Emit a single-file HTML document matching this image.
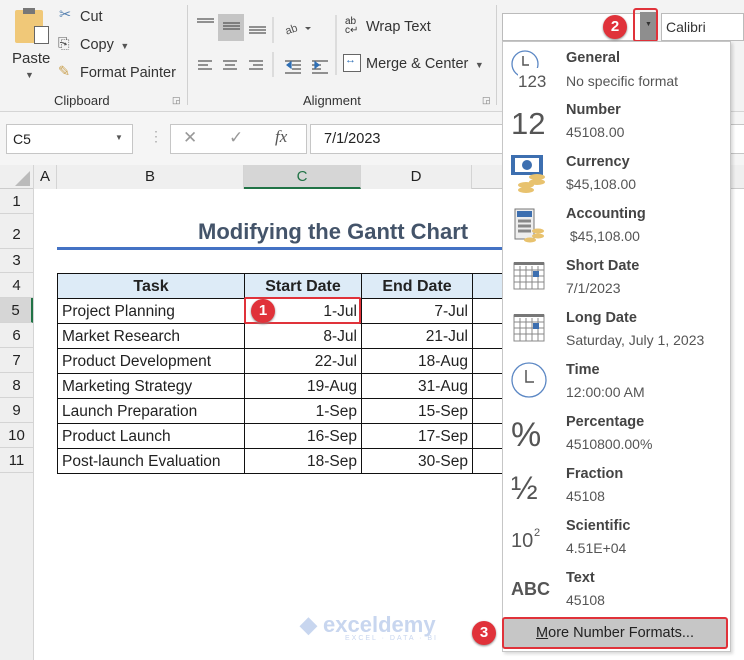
<!DOCTYPE html>
<html><head><meta charset="utf-8"><style>
*{margin:0;padding:0;box-sizing:border-box}
body{width:744px;height:660px;overflow:hidden;position:relative;background:#fff;font-family:"Liberation Sans",sans-serif;color:#222}
.a{position:absolute}
.t{position:absolute;white-space:nowrap}
.rib{font-size:14.5px;color:#333}
.rh{position:absolute;left:0;width:33px;background:#efefef;border-bottom:1px solid #d4d4d4;text-align:center;font-size:15px;color:#222}
.ch{position:absolute;top:165px;height:24px;background:#efefef;border-right:1px solid #d4d4d4;text-align:center;font-size:15px;line-height:24px}
.cell{position:absolute;height:26px;border:1px solid #111;font-size:15.5px;line-height:26px;padding:0 4px;font-family:"Liberation Sans",sans-serif}
.badge{position:absolute;width:24px;height:24px;border-radius:50%;background:#e0323a;color:#fff;font-weight:bold;font-size:15px;text-align:center;line-height:24px;box-shadow:0 1px 2px #888}
.lab{position:absolute;left:566px;font-size:14.5px;font-weight:bold;color:#444}
.sub{position:absolute;left:566px;font-size:14px;color:#555}
</style></head><body>
<div class="a" style="left:0;top:0;width:744px;height:112px;background:#f3f3f3;border-bottom:1px solid #d5d5d5"></div>
<div class="a" style="left:15px;top:10px;width:28px;height:33px;background:#f0c878;border-radius:2px"></div>
<div class="a" style="left:23px;top:8px;width:12px;height:6px;background:#777"></div>
<div class="a" style="left:34px;top:26px;width:15px;height:18px;background:#fff;border:1px solid #666"></div>
<div class="t rib" style="left:12px;top:50px;font-size:15px">Paste</div>
<div class="t" style="left:25px;top:70px;font-size:9px;color:#555">▼</div>
<div class="t rib" style="left:59px;top:7px;color:#5580b0">✂</div>
<div class="t rib" style="left:80px;top:9px">Cut</div>
<div class="t rib" style="left:58px;top:36px;color:#555">⎘</div>
<div class="t rib" style="left:80px;top:37px">Copy <span style="font-size:9px;color:#555">&nbsp;▼</span></div>
<div class="t rib" style="left:58px;top:64px;color:#c9a050">✎</div>
<div class="t rib" style="left:80px;top:65px">Format Painter</div>
<div class="t" style="left:54px;top:93px;font-size:13px;color:#333">Clipboard</div>
<div class="a" style="left:187px;top:5px;width:1px;height:100px;background:#d0d0d0"></div>
<div class="a" style="left:218px;top:14px;width:26px;height:27px;background:#c5c5c5"></div>
<svg class="a" style="left:195px;top:15px" width="270" height="62" stroke="#555" stroke-width="1.2">
<path d="M2 4h17M2 7h17M28 8h17M28 11h17M28 14h17M54 12h17M54 15h17M54 18h17"/>
<path d="M3 46h14M3 50h10M3 54h14M28 46h14M30 50h10M28 54h14M54 46h14M58 50h10M54 54h14"/>
<path d="M90 46h16M97 50h9M97 54h9M90 58h16M117 46h16M117 50h9M117 54h9M117 58h16"/>
<path d="M92 50l4-3v6z M124 50l-4-3v6z" fill="#2e6fb5" stroke="#2e6fb5"/>
<path d="M78 2v26M78 37v26M141 -5v65" stroke="#ccc"/>
<text x="90" y="18" font-size="11" fill="#555" stroke="none" transform="rotate(-20 96 14)">ab</text>
<path d="M110 12l3 3 3-3" fill="#555" stroke="none"/>
</svg>
<div class="t" style="left:345px;top:17px;font-size:10px;line-height:9px;color:#333">ab<br>c↵</div>
<div class="t rib" style="left:366px;top:19px">Wrap Text</div>
<div class="a" style="left:343px;top:54px;width:18px;height:18px;border:1px solid #666;background:#fff"></div>
<div class="t" style="left:345px;top:54px;font-size:11px;color:#2e6fb5">↔</div>
<div class="t rib" style="left:366px;top:56px">Merge &amp; Center <span style="font-size:9px;color:#555">&nbsp;▼</span></div>
<div class="t" style="left:303px;top:93px;font-size:13px;color:#333">Alignment</div>
<div class="t" style="left:172px;top:95px;font-size:9px;color:#777">◲</div>
<div class="t" style="left:482px;top:95px;font-size:9px;color:#777">◲</div>
<div class="a" style="left:496px;top:5px;width:1px;height:100px;background:#d0d0d0"></div>
<div class="a" style="left:502px;top:13px;width:155px;height:28px;background:#fff;border:1px solid #bbb"></div>
<div class="a" style="left:633px;top:8px;width:25px;height:34px;border:2px solid #e0323a;border-radius:3px"></div>
<div class="a" style="left:640px;top:12px;width:16px;height:28px;background:#8e8e8e"></div>
<div class="t" style="left:645px;top:21px;font-size:7px;color:#333">▼</div>
<div class="a" style="left:661px;top:13px;width:83px;height:28px;background:#fff;border:1px solid #bbb"></div>
<div class="t" style="left:666px;top:19px;font-size:14px;color:#333">Calibri</div>
<div class="a" style="left:0;top:112px;width:744px;height:53px;background:#f5f5f5"></div>
<div class="a" style="left:6px;top:124px;width:127px;height:30px;background:#fff;border:1px solid #c6c6c6"></div>
<div class="t" style="left:13px;top:131px;font-size:14px">C5</div>
<div class="t" style="left:115px;top:133px;font-size:8px;color:#555">▼</div>
<div class="t" style="left:149px;top:128px;font-size:14px;color:#aaa">⋮</div>
<div class="a" style="left:170px;top:124px;width:137px;height:30px;background:#fff;border:1px solid #c6c6c6"></div>
<div class="t" style="left:183px;top:128px;font-size:17px;color:#999">✕</div>
<div class="t" style="left:229px;top:128px;font-size:17px;color:#999">✓</div>
<div class="t" style="left:275px;top:127px;font-size:17px;color:#555;font-style:italic;font-family:'Liberation Serif',serif">fx</div>
<div class="a" style="left:310px;top:124px;width:440px;height:30px;background:#fff;border:1px solid #c6c6c6"></div>
<div class="t" style="left:324px;top:131px;font-size:14.5px">7/1/2023</div>
<div class="a" style="left:0;top:165px;width:744px;height:24px;background:#efefef;border-bottom:1px solid #ccc"></div>
<svg class="a" style="left:14px;top:171px" width="17" height="16"><path d="M16 0V15H1z" fill="#bbb"/></svg>
<div class="ch" style="left:33px;width:24px;border-left:1px solid #d4d4d4">A</div>
<div class="ch" style="left:57px;width:187px">B</div>
<div class="ch" style="left:244px;width:117px;background:#d6d6d6;border-bottom:2px solid #217346;color:#217346">C</div>
<div class="ch" style="left:361px;width:111px">D</div>
<div class="a" style="left:33px;top:189px;width:1px;height:471px;background:#d4d4d4"></div>
<div class="rh" style="top:189px;height:25px;line-height:25px">1</div>
<div class="rh" style="top:214px;height:35px;line-height:42px">2</div>
<div class="rh" style="top:249px;height:24px;line-height:24px">3</div>
<div class="rh" style="top:273px;height:25px;line-height:25px">4</div>
<div class="rh" style="top:298px;height:25px;line-height:25px;background:#d6d6d6;border-right:2px solid #217346">5</div>
<div class="rh" style="top:323px;height:25px;line-height:25px">6</div>
<div class="rh" style="top:348px;height:25px;line-height:25px">7</div>
<div class="rh" style="top:373px;height:25px;line-height:25px">8</div>
<div class="rh" style="top:398px;height:25px;line-height:25px">9</div>
<div class="rh" style="top:423px;height:25px;line-height:25px">10</div>
<div class="rh" style="top:448px;height:25px;line-height:25px">11</div>
<div class="rh" style="top:473px;height:187px;border:none"></div>
<div class="t" style="left:198px;top:219px;font-size:22px;font-weight:bold;color:#44546a">Modifying the Gantt Chart</div>
<div class="a" style="left:57px;top:247px;width:450px;height:3px;background:#4472c4"></div>
<div id="tbl"></div>
<div class="cell" style="left:57px;top:273px;width:188px;background:#ddebf7;font-weight:bold;text-align:center;font-size:16px">Task</div>
<div class="cell" style="left:244px;top:273px;width:118px;background:#ddebf7;font-weight:bold;text-align:center;font-size:16px">Start Date</div>
<div class="cell" style="left:361px;top:273px;width:112px;background:#ddebf7;font-weight:bold;text-align:center;font-size:16px">End Date</div>
<div class="cell" style="left:472px;top:273px;width:40px;background:#ddebf7"></div>
<script>
var r=[["Project Planning","1-Jul","7-Jul"],["Market Research","8-Jul","21-Jul"],["Product Development","22-Jul","18-Aug"],["Marketing Strategy","19-Aug","31-Aug"],["Launch Preparation","1-Sep","15-Sep"],["Product Launch","16-Sep","17-Sep"],["Post-launch Evaluation","18-Sep","30-Sep"]];
var h="";r.forEach(function(x,i){var y=298+i*25;
h+='<div class="cell" style="left:57px;top:'+y+'px;width:188px">'+x[0]+'</div><div class="cell" style="left:244px;top:'+y+'px;width:118px;text-align:right">'+x[1]+'</div><div class="cell" style="left:361px;top:'+y+'px;width:112px;text-align:right">'+x[2]+'</div><div class="cell" style="left:472px;top:'+y+'px;width:40px"></div>';});
document.getElementById("tbl").outerHTML=h;
</script>
<div class="a" style="left:244px;top:297px;width:117px;height:27px;border:2px solid #e0323a;border-radius:2px"></div>
<div class="badge" style="left:251px;top:299px">1</div>
<div class="t" style="left:300px;top:612px;font-size:22px;font-weight:bold;color:#c8d6ef">◆ exceldemy</div>
<div class="t" style="left:345px;top:635px;font-size:7px;color:#c8d6ef;letter-spacing:2px">EXCEL · DATA · BI</div>
<div class="a" style="left:502px;top:41px;width:229px;height:611px;background:#fff;border:1px solid #c6c6c6;box-shadow:2px 2px 3px rgba(0,0,0,.15)"></div>
<svg class="a" style="left:508px;top:44px" width="50" height="570" font-family="Liberation Sans" fill="#555">
<circle cx="17" cy="20" r="13" fill="none" stroke="#5b87c4" stroke-width="1.3"/><path d="M15 12v9h6" stroke="#555" stroke-width="1.5" fill="none"/>
<rect x="10" y="24" width="32" height="20" fill="#fff"/><text x="10" y="43" font-size="17">123</text>
<text x="3" y="90" font-size="31">12</text>
<rect x="3" y="111" width="32" height="20" fill="#3d6fb0"/><rect x="7" y="114" width="24" height="14" fill="#fff"/><circle cx="19" cy="121" r="5" fill="#3d6fb0"/>
<ellipse cx="29" cy="133" rx="8" ry="3" fill="#e8c26e"/><ellipse cx="29" cy="138" rx="8" ry="3" fill="#e8c26e"/><ellipse cx="18" cy="141" rx="8" ry="3" fill="#e8c26e"/><ellipse cx="18" cy="146" rx="8" ry="3" fill="#e8c26e"/>
<rect x="7" y="165" width="19" height="30" fill="#eee" stroke="#777"/><rect x="9" y="167" width="15" height="6" fill="#3d6fb0"/>
<path d="M10 177h13M10 182h13M10 187h13" stroke="#888" stroke-width="3"/>
<ellipse cx="30" cy="187" rx="6" ry="2.5" fill="#e8c26e"/><ellipse cx="30" cy="192" rx="6" ry="2.5" fill="#e8c26e"/><ellipse cx="22" cy="196" rx="6" ry="2.5" fill="#e8c26e"/>
<g stroke="#888" fill="none"><rect x="6" y="219" width="30" height="26"/><path d="M6 226h30M6 232h30M6 238h30M12 222v23M18 222v23M24 222v23M30 222v23"/>
<rect x="6" y="271" width="30" height="26"/><path d="M6 278h30M6 284h30M6 290h30M12 274v23M18 274v23M24 274v23M30 274v23"/></g>
<rect x="6" y="218" width="30" height="3" fill="#777"/><rect x="6" y="270" width="30" height="3" fill="#777"/>
<rect x="25" y="227" width="6" height="6" fill="#3d6fb0"/><rect x="25" y="279" width="6" height="6" fill="#3d6fb0"/>
<circle cx="21" cy="336" r="17" fill="none" stroke="#5b87c4" stroke-width="1.3"/><path d="M18 326v12h8" stroke="#555" stroke-width="1.5" fill="none"/>
<text x="3" y="402" font-size="34">%</text>
<text x="3" y="455" font-size="32">½</text>
<text x="3" y="503" font-size="20">10</text><text x="26" y="492" font-size="11">2</text>
<text x="3" y="551" font-size="18" font-weight="bold">ABC</text>
</svg>
<div class="lab" style="top:50px">General</div><div class="sub" style="top:73px">No specific format</div>
<div class="lab" style="top:102px">Number</div><div class="sub" style="top:124px">45108.00</div>
<div class="lab" style="top:154px">Currency</div><div class="sub" style="top:176px">$45,108.00</div>
<div class="lab" style="top:206px">Accounting</div><div class="sub" style="top:228px">&nbsp;$45,108.00</div>
<div class="lab" style="top:258px">Short Date</div><div class="sub" style="top:280px">7/1/2023</div>
<div class="lab" style="top:310px">Long Date</div><div class="sub" style="top:332px">Saturday, July 1, 2023</div>
<div class="lab" style="top:362px">Time</div><div class="sub" style="top:384px">12:00:00 AM</div>
<div class="lab" style="top:414px">Percentage</div><div class="sub" style="top:436px">4510800.00%</div>
<div class="lab" style="top:466px">Fraction</div><div class="sub" style="top:488px">45108</div>
<div class="lab" style="top:518px">Scientific</div><div class="sub" style="top:540px">4.51E+04</div>
<div class="lab" style="top:570px">Text</div><div class="sub" style="top:592px">45108</div>
<div class="a" style="left:502px;top:617px;width:226px;height:32px;background:#c6c6c6;border:2px solid #e0323a;border-radius:3px;text-align:center;line-height:28px;font-size:14.5px;color:#222"><u>M</u>ore Number Formats...</div>
<div class="badge" style="left:603px;top:15px">2</div>
<div class="badge" style="left:472px;top:621px">3</div>
</body></html>
